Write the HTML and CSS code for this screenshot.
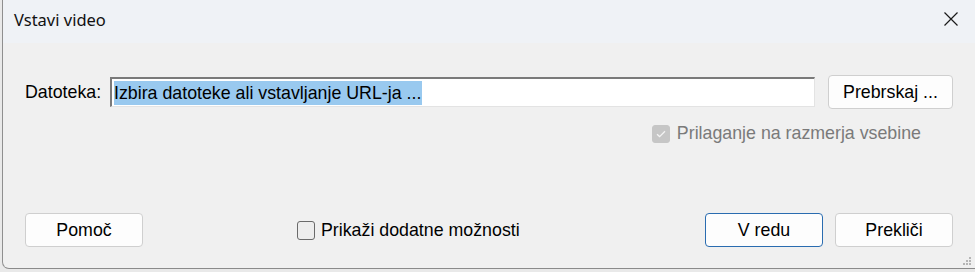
FILE: index.html
```html
<!DOCTYPE html>
<html lang="sl">
<head>
    <meta charset="UTF-8">
    <title>Vstavi video</title>
    <link rel="stylesheet" href="styles.css">
</head>
<body>
    <div class="window">
        <div class="titlebar">
            <div class="title">Vstavi video</div>
            <div class="close">
                <svg width="14" height="14" viewBox="0 0 14 14"><path d="M0.5 0.5 L13.5 13.5 M13.5 0.5 L0.5 13.5" stroke="#1a1a1a" stroke-width="1.2" fill="none"/></svg>
            </div>
        </div>
        <div class="content">
            <div class="file-row">
                <span class="label">Datoteka:</span>
                <div class="field"><span class="selected">Izbira datoteke ali vstavljanje URL-ja ...</span></div>
                <button class="btn browse">Prebrskaj ...</button>
            </div>
            <div class="fit-row">
                <span class="check checked-disabled">
                    <svg width="12" height="10" viewBox="0 0 12 10"><path d="M2 5.2 L4.6 7.6 L10 2.2" stroke="#f4f4f4" stroke-width="1.3" fill="none"/></svg>
                </span>
                <span class="fit-label">Prilaganje na razmerja vsebine</span>
            </div>
            <div class="spacer"></div>
            <div class="bottom-row">
                <button class="btn">Pomoč</button>
                <label class="more">
                    <span class="check"></span>
                    <span>Prikaži dodatne možnosti</span>
                </label>
                <button class="btn ok">V redu</button>
                <button class="btn cancel">Prekliči</button>
            </div>
        </div>
        <div class="grip">
            <svg width="10" height="10" viewBox="0 0 10 10" fill="#b5b5b5">
                <rect x="7" y="1" width="2" height="2"/>
                <rect x="4" y="4" width="2" height="2"/><rect x="7" y="4" width="2" height="2"/>
                <rect x="1" y="7" width="2" height="2"/><rect x="4" y="7" width="2" height="2"/><rect x="7" y="7" width="2" height="2"/>
            </svg>
        </div>
    </div>
</body>
</html>
```

FILE: styles.css
```css
body {
    margin: 0;
    background-color: #e9e9e9;
    font-family: "Liberation Sans", Arial, sans-serif;
    width: 975px;
    height: 272px;
    overflow: hidden;
}
.window {
    position: relative;
    margin-left: 2px;
    height: 269px;
    border-left: 1px solid #8f8f8f;
    border-bottom: 1px solid #8a8a8a;
    border-bottom-left-radius: 7px;
    background-color: #f0f0f0;
    display: flex;
    flex-direction: column;
    box-sizing: border-box;
}
.titlebar {
    height: 43px;
    background-color: #eff2f6;
    display: flex;
    align-items: center;
    justify-content: space-between;
    flex-shrink: 0;
}
.title {
    font-family: "Noto Sans", "Open Sans", sans-serif;
    font-size: 16.5px;
    color: #111;
    padding-left: 11px;
    margin-top: -5px;
}
.close {
    width: 14px;
    height: 14px;
    margin-right: 17px;
    margin-top: -6px;
}
.close svg {
    display: block;
}
.content {
    flex: 1;
    display: flex;
    flex-direction: column;
    padding: 32px 22px 21px 22px;
    font-size: 17.8px;
    color: #000;
}
.file-row {
    display: flex;
    align-items: center;
    height: 34px;
}
.label {
    width: 85px;
    flex-shrink: 0;
}
.field {
    flex: 1;
    height: 30px;
    box-sizing: border-box;
    background-color: #fff;
    border-top: 2px solid #7a7a7a;
    border-left: 2px solid #7a7a7a;
    border-right: 1px solid #e3e3e3;
    border-bottom: 1px solid #e3e3e3;
    padding: 1px 0 0 2px;
    display: flex;
    align-items: center;
    margin-right: 13px;
}
.selected {
    background-color: #99c9ef;
    line-height: 24px;
    padding-right: 1px;
}
.btn {
    font-family: "Liberation Sans", Arial, sans-serif;
    font-size: 17.8px;
    color: #000;
    background-color: #fdfdfd;
    border: 1px solid #cfcfcf;
    border-radius: 4px;
    height: 34px;
    width: 118px;
    padding: 0;
}
.browse {
    width: 125px;
}
.fit-row {
    display: flex;
    align-items: center;
    justify-content: flex-end;
    margin-top: 14px;
    margin-right: 32px;
    color: #7a7a7a;
}
.check {
    width: 18px;
    height: 18px;
    box-sizing: border-box;
    border: 1px solid #6a6a6a;
    border-radius: 3px;
    background-color: #ededed;
    display: flex;
    align-items: center;
    justify-content: center;
    flex-shrink: 0;
}
.checked-disabled {
    background-color: #c6c6c6;
    border-color: #c6c6c6;
    margin-right: 7px;
}
.spacer {
    flex: 1;
}
.bottom-row {
    display: flex;
    align-items: center;
}
.more {
    display: flex;
    align-items: center;
    gap: 6px;
    margin-left: 154px;
}
.more .check {
    height: 19px;
}
.ok {
    margin-left: auto;
    border-color: #2a6cb0;
}
.cancel {
    margin-left: 12px;
}
.grip {
    position: absolute;
    right: 3px;
    bottom: 2px;
    line-height: 0;
}
```
